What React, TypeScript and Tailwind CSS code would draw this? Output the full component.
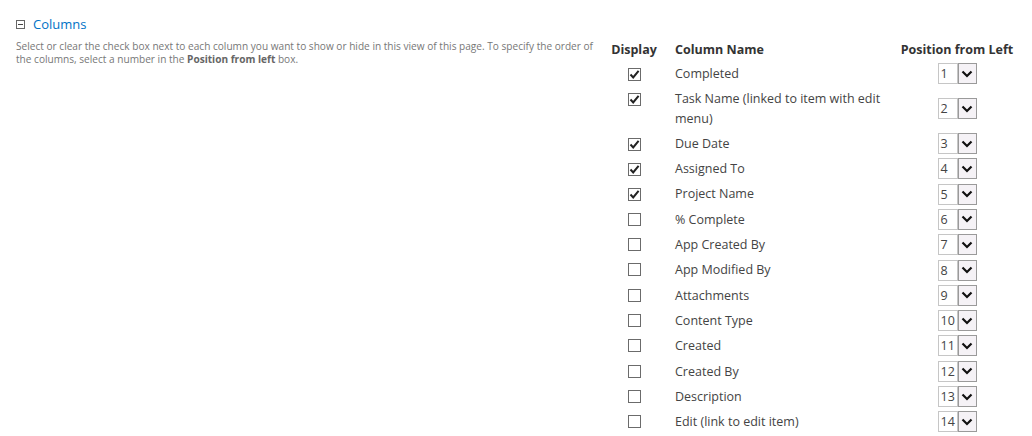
import React from 'react';

type Col = { name: string; checked: boolean };

const COLUMNS: Col[] = [
  { name: 'Completed', checked: true },
  { name: 'Task Name (linked to item with edit menu)', checked: true },
  { name: 'Due Date', checked: true },
  { name: 'Assigned To', checked: true },
  { name: 'Project Name', checked: true },
  { name: '% Complete', checked: false },
  { name: 'App Created By', checked: false },
  { name: 'App Modified By', checked: false },
  { name: 'Attachments', checked: false },
  { name: 'Content Type', checked: false },
  { name: 'Created', checked: false },
  { name: 'Created By', checked: false },
  { name: 'Description', checked: false },
  { name: 'Edit (link to edit item)', checked: false },
  { name: 'Folder Child Count', checked: false },
];

function CheckBox({ checked }: { checked: boolean }) {
  return (
    <span className="inline-flex items-center justify-center w-[13px] h-[13px] border border-[#6b6b6b] bg-white">
      {checked && (
        <svg width="11" height="11" viewBox="0 0 11 11">
          <path d="M1.5 5.5 L4.2 8.4 L9.6 1.8" fill="none" stroke="#222" strokeWidth="2" />
        </svg>
      )}
    </span>
  );
}

function PositionSelect({ value }: { value: number }) {
  return (
    <div className="inline-flex h-[21px] align-middle">
      <span className="w-[20px] h-full border border-[#c6c6c6] bg-white text-[12.5px] leading-[19px] pl-[2px] text-left text-[#444]">
        {value}
      </span>
      <span className="w-[19px] h-full border border-[#9a9a9a] bg-[#f5f2f6] flex items-center justify-center">
        <svg width="12" height="8" viewBox="0 0 12 8">
          <path d="M1.5 1.5 L6 6 L10.5 1.5" fill="none" stroke="#111" strokeWidth="2.2" />
        </svg>
      </span>
    </div>
  );
}

export default function App() {
  return (
    <div className="flex w-[1032px] h-[436px] overflow-hidden bg-white font-['Segoe_UI','Open_Sans',sans-serif]">
      {/* Section description */}
      <div className="w-[604px] shrink-0 pl-[16px] pr-[4px] pt-[14px]">
        <div className="flex items-center gap-[8px] h-[20px]">
          <span className="w-[9px] h-[9px] border border-[#666] flex items-center justify-center">
            <span className="w-[5px] h-px bg-[#444]" />
          </span>
          <span className="text-[13px] text-[#0072c6] leading-[20px]">Columns</span>
        </div>
        <p className="mt-[6px] text-[10.1px] leading-[13px] text-[#777]">
          Select or clear the check box next to each column you want to show or hide in this view of this page. To specify the order of
          the columns, select a number in the <span className="font-bold text-[#666]">Position from left</span> box.
        </p>
      </div>

      {/* Column table */}
      <div className="pt-[39px]">
        <table className="border-collapse text-[12.5px]">
          <thead>
            <tr className="h-[22px]">
              <th className="w-[60px] text-center font-bold text-[#333] leading-[22px] p-0">Display</th>
              <th className="w-[227px] text-left font-bold text-[#333] pl-[11px] leading-[22px] p-0">Column Name</th>
              <th className="w-[132px] text-center font-bold text-[#333] leading-[22px] p-0">Position from Left</th>
            </tr>
          </thead>
          <tbody>
            {COLUMNS.map((c, i) => (
              <tr key={c.name}>
                <td className="text-center align-top pt-[6px] pb-0 px-0">
                  <CheckBox checked={c.checked} />
                </td>
                <td className="pl-[11px] pr-[8px] py-[3px] leading-[19.3px] text-[#444] align-top">{c.name}</td>
                <td className="text-center align-middle p-0">
                  <PositionSelect value={i + 1} />
                </td>
              </tr>
            ))}
          </tbody>
        </table>
      </div>
    </div>
  );
}
